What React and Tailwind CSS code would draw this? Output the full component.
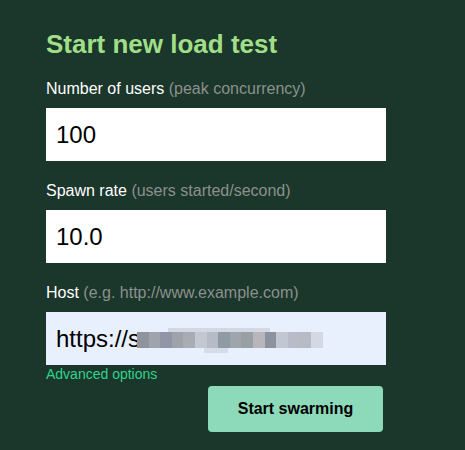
import React from 'react';

const blurBlocks = [
  '#8e939e', '#9fa3ab', '#9295a5', '#a0a2aa', '#a7adb3', '#c4c8d2', '#b5bbc7', '#8e9ba3',
  '#9ea5ab', '#99a0a5', '#b8b5bb', '#8c929e', '#c3c7d2', '#b9bbc8', '#b6bbc5', '#d4d8e3',
];

const Field = ({ label, hint, value, autofill, children }) => (
  <div className="flex flex-col gap-[7px]">
    <label className="text-[16px] leading-6 text-white">
      {label} <span className="text-[#8b918d]">{hint}</span>
    </label>
    <div className="relative">
      <input
        readOnly
        value={value}
        className={`block h-[53px] w-full px-2.5 text-[24px] text-black outline-none ${
          autofill ? 'bg-[#e8f0fe]' : 'bg-white'
        }`}
        style={{ fontFamily: '"Liberation Sans", Arial, sans-serif' }}
      />
      {children}
    </div>
  </div>
);

export default function App() {
  return (
    <div
      className="min-h-[450px] w-[465px] bg-[#1b362b] pl-[46px] pt-[28px]"
      style={{ fontFamily: '"Liberation Sans", Arial, sans-serif' }}
    >
      <div className="flex w-[340px] flex-col">
        <h1 className="text-[26px] font-bold leading-8 text-[#a0df87]">Start new load test</h1>

        <form className="mt-[17px] flex flex-col gap-[18px]">
          <Field label="Number of users" hint="(peak concurrency)" value="100" />
          <Field label="Spawn rate" hint="(users started/second)" value="10.0" />
          <Field label="Host" hint="(e.g. http://www.example.com)" value="https://s" autofill>
            {/* blurred part of the host, painted over the input */}
            <div className="pointer-events-none absolute left-[91px] top-[16px] h-[25px] w-[190px]">
              <div className="absolute left-[31px] top-0 h-[5px] w-[102px] bg-[#d3d8e4]" />
              <div className="absolute left-[67px] top-[20px] h-[5px] w-[24px] bg-[#d6dbe7]" />
              <div className="absolute left-0 top-[4px] flex h-[16px]">
                {blurBlocks.map((c, i) => (
                  <span key={i} className="block h-full w-[11.6px]" style={{ background: c }} />
                ))}
              </div>
            </div>
          </Field>
        </form>

        <a className="mt-px text-[14px] leading-4 text-[#2fd48c]" href="#">
          Advanced options
        </a>

        <button
          type="button"
          className="mr-[3px] mt-1 h-[46px] w-[175px] self-end rounded-[4px] bg-[#8ddabb] text-[16px] font-bold text-black"
        >
          Start swarming
        </button>
      </div>
    </div>
  );
}
